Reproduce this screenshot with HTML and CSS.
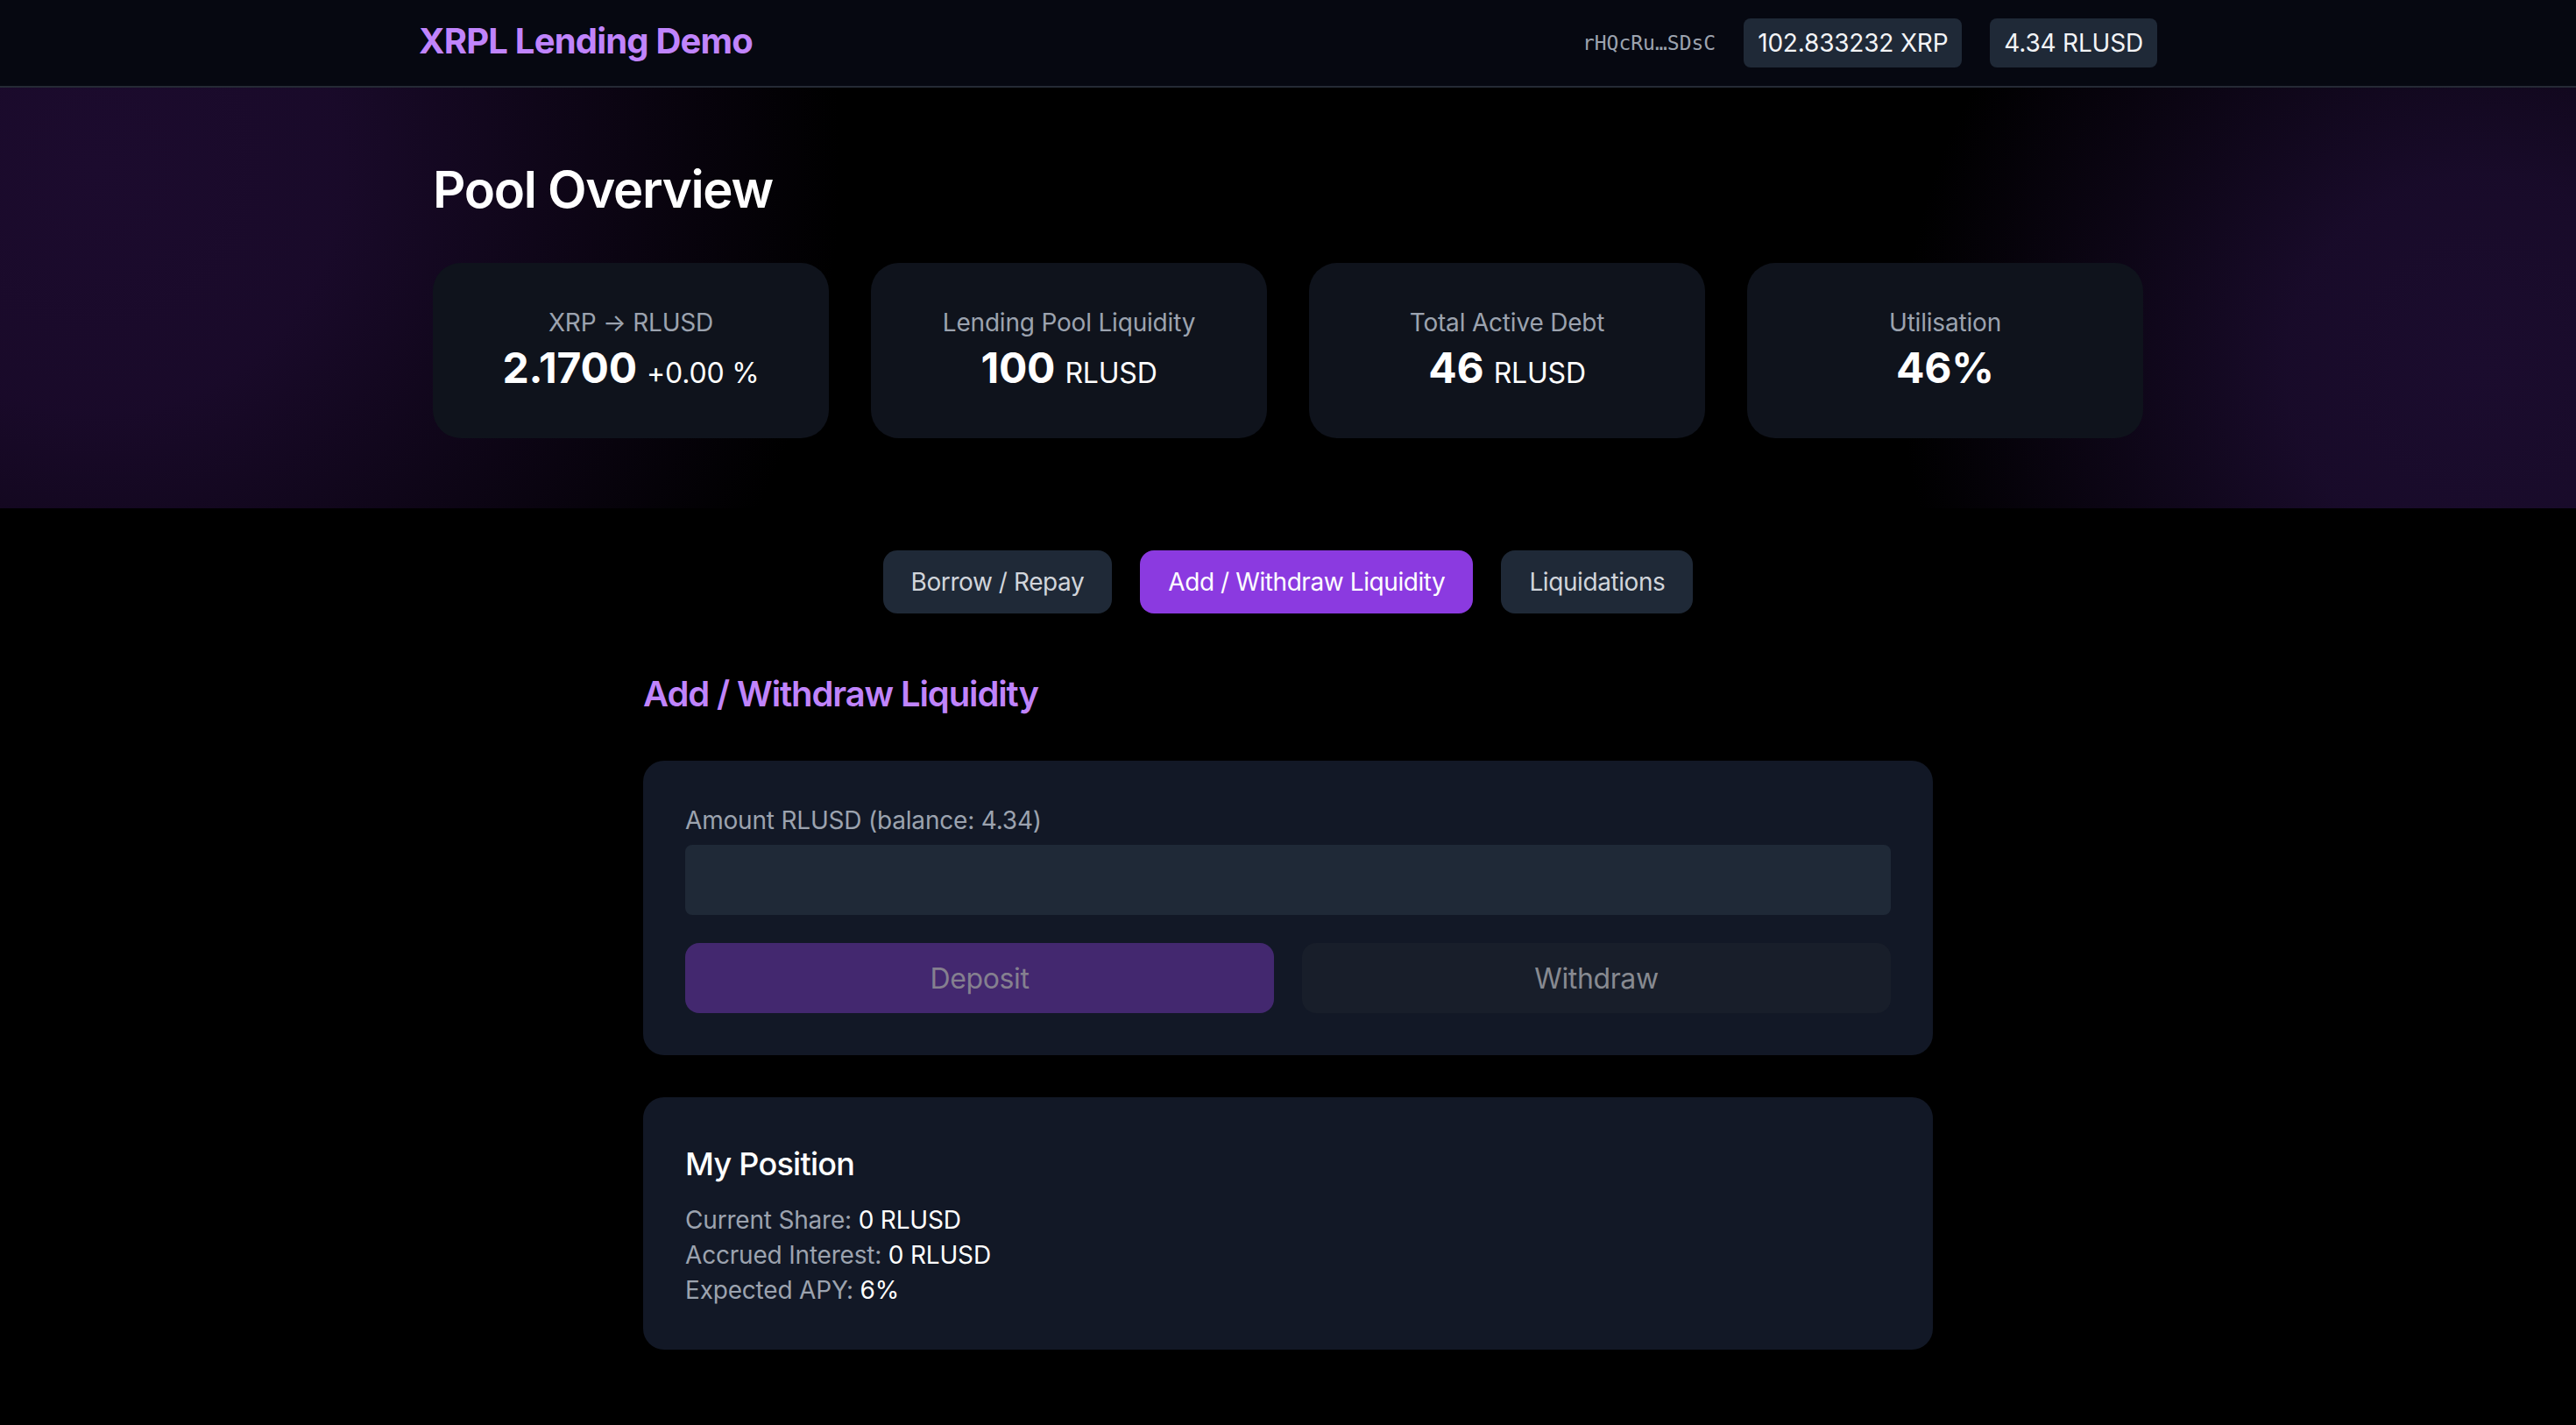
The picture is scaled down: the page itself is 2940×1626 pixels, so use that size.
FILE: index.html
```html
<!DOCTYPE html>
<html lang="en">
<head>
<meta charset="utf-8">
<title>XRPL Lending Demo</title>
<link rel="stylesheet" href="styles.css">
</head>
<body>
<header class="topbar">
  <div class="topbar-inner">
    <div class="brand">XRPL Lending Demo</div>
    <div class="wallet">
      <span class="address">rHQcRu…SDsC</span>
      <span class="pill">102.833232 XRP</span>
      <span class="pill">4.34 RLUSD</span>
    </div>
  </div>
</header>

<section class="hero">
  <div class="hero-inner">
    <h1 class="hero-title">Pool Overview</h1>
    <div class="stats">
      <div class="stat">
        <div class="stat-label">XRP → RLUSD</div>
        <div class="stat-value">2.1700 <span class="stat-unit">+0.00 %</span></div>
      </div>
      <div class="stat">
        <div class="stat-label">Lending Pool Liquidity</div>
        <div class="stat-value">100 <span class="stat-unit">RLUSD</span></div>
      </div>
      <div class="stat">
        <div class="stat-label">Total Active Debt</div>
        <div class="stat-value">46 <span class="stat-unit">RLUSD</span></div>
      </div>
      <div class="stat">
        <div class="stat-label">Utilisation</div>
        <div class="stat-value">46%</div>
      </div>
    </div>
  </div>
</section>

<main class="main">
  <nav class="tabs">
    <button class="tab">Borrow / Repay</button>
    <button class="tab tab-active">Add / Withdraw Liquidity</button>
    <button class="tab">Liquidations</button>
  </nav>

  <div class="panel">
    <h2 class="panel-title">Add / Withdraw Liquidity</h2>

    <div class="card">
      <label class="field-label">Amount RLUSD (balance: 4.34)</label>
      <input class="field-input" type="text">
      <div class="actions">
        <button class="btn btn-deposit" disabled>Deposit</button>
        <button class="btn btn-withdraw" disabled>Withdraw</button>
      </div>
    </div>

    <div class="card card-position">
      <h3 class="position-title">My Position</h3>
      <p class="row"><span class="muted">Current Share:</span> 0 RLUSD</p>
      <p class="row"><span class="muted">Accrued Interest:</span> 0 RLUSD</p>
      <p class="row"><span class="muted">Expected APY:</span> 6%</p>
    </div>
  </div>
</main>
</body>
</html>
```

FILE: styles.css
```css
* { box-sizing: border-box; }

html, body {
  margin: 0;
  padding: 0;
  background: #000;
  color: #fff;
  font-family: Inter, "Noto Sans", "Liberation Sans", sans-serif;
  letter-spacing: -0.012em;
}

.topbar {
  height: 100px;
  background: #060811;
  border-bottom: 2px solid #252a35;
}

.topbar-inner {
  max-width: 2048px;
  height: 98px;
  margin: 0 auto;
  padding: 0 32px;
  display: flex;
  align-items: center;
  justify-content: space-between;
}

.brand {
  font-size: 40px;
  line-height: 56px;
  font-weight: 700;
  color: #c084fc;
  letter-spacing: -0.02em;
  margin-top: -4px;
}

.wallet {
  display: flex;
  align-items: center;
  gap: 32px;
}

.address {
  font-family: "DejaVu Sans Mono", "Liberation Mono", monospace;
  font-size: 23px;
  letter-spacing: 0;
  color: #9ca3af;
}

.pill {
  background: #1f2937;
  border-radius: 8px;
  padding: 8px 16px;
  font-size: 28px;
  line-height: 40px;
  color: #f3f4f6;
}

.hero {
  background:
    radial-gradient(circle at 2830px 320px, #1b0c2e 0px, rgba(27, 12, 46, 0.9) 220px, rgba(27, 12, 46, 0) 660px),
    radial-gradient(circle at 110px 90px, #1c0b2e 0px, rgba(28, 11, 46, 0.9) 280px, rgba(28, 11, 46, 0) 850px),
    #000;
  padding: 80px 0;
}

.hero-inner {
  max-width: 2048px;
  margin: 0 auto;
  padding: 0 48px;
}

.hero-title {
  margin: 0 0 48px;
  font-size: 58px;
  line-height: 72px;
  font-weight: 600;
  letter-spacing: -0.022em;
  color: #fff;
}

.stats {
  display: grid;
  grid-template-columns: repeat(4, 1fr);
  gap: 48px;
}

.stat {
  background: #0f131c;
  border-radius: 32px;
  padding: 48px;
  text-align: center;
}

.stat-label {
  font-size: 28px;
  line-height: 40px;
  color: #9ca3af;
}

.stat-value {
  font-size: 48px;
  line-height: 64px;
  height: 64px;
  font-weight: 700;
  color: #fff;
}

.stat-unit {
  font-size: 32px;
  line-height: 1;
  font-weight: 400;
}

.main {
  padding: 48px 0 80px;
}

.tabs {
  display: flex;
  justify-content: center;
  gap: 32px;
  margin-bottom: 64px;
}

.tab {
  font-family: inherit;
  letter-spacing: -0.015em;
  border: none;
  background: #1f2937;
  color: #d1d5db;
  font-size: 28px;
  line-height: 40px;
  padding: 16px 32px;
  border-radius: 16px;
}

.tab-active {
  background: #8b3ae0;
  color: #fff;
}

.panel {
  max-width: 1536px;
  margin: 0 auto;
  padding: 0 32px;
}

.panel-title {
  margin: 0 0 48px;
  font-size: 40px;
  line-height: 56px;
  font-weight: 600;
  letter-spacing: -0.028em;
  color: #c084fc;
}

.card {
  background: #121826;
  border-radius: 24px;
  padding: 48px;
}

.field-label {
  display: block;
  font-size: 28px;
  line-height: 40px;
  color: #9ca3af;
  margin-bottom: 8px;
}

.field-input {
  display: block;
  width: 100%;
  height: 80px;
  border: none;
  border-radius: 8px;
  background: #1f2937;
  color: #fff;
  font-family: inherit;
  font-size: 32px;
  padding: 0 24px;
}

.actions {
  display: grid;
  grid-template-columns: 1fr 1fr;
  gap: 32px;
  margin-top: 32px;
}

.btn {
  font-family: inherit;
  letter-spacing: -0.012em;
  border: none;
  height: 80px;
  border-radius: 16px;
  font-size: 32px;
}

.btn-deposit {
  background: #43286f;
  color: #85808f;
}

.btn-withdraw {
  background: #181e2a;
  color: #878a91;
}

.card-position {
  margin-top: 48px;
}

.position-title {
  margin: 0 0 16px;
  font-size: 36px;
  line-height: 56px;
  font-weight: 500;
  letter-spacing: -0.02em;
  color: #fff;
}

.row {
  margin: 0;
  font-size: 28px;
  line-height: 40px;
  color: #fff;
}

.muted {
  color: #9ca3af;
}
```
